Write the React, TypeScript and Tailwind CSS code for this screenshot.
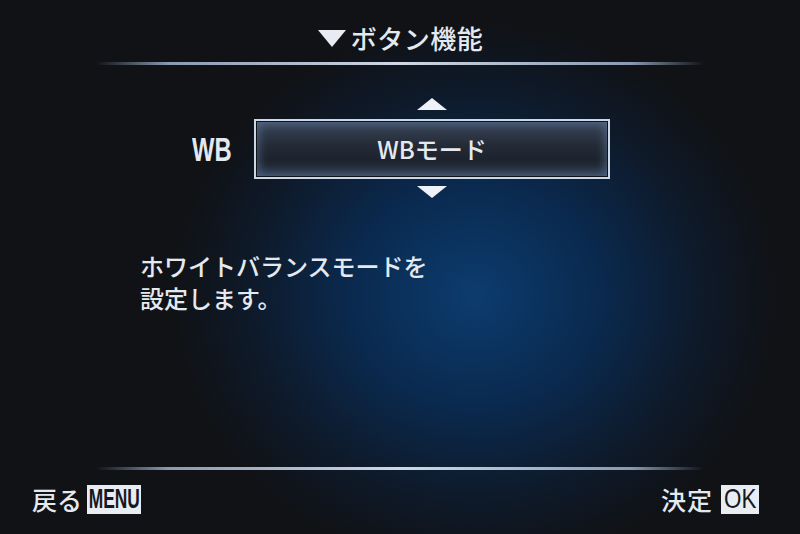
import React from "react";

const jp = "font-['Noto_Sans_CJK_JP','Noto_Sans',sans-serif]";
const latin = "font-['Liberation_Sans','Noto_Sans',sans-serif]";

function Divider() {
  return (
    <div className="mx-[96px] h-[3px] bg-[linear-gradient(to_right,rgba(120,140,170,0),#8a9ab2_12%,#cfd8e6_50%,#8a9ab2_88%,rgba(120,140,170,0))]" />
  );
}

function Arrow({ up }: { up?: boolean }) {
  return (
    <svg width="32" height="12" viewBox="0 0 32 12" className="block">
      {up ? (
        <polygon points="16,0 31,12 1,12" fill="#eef2f8" />
      ) : (
        <polygon points="1,0 31,0 16,12" fill="#eef2f8" />
      )}
    </svg>
  );
}

function KeyBadge({ label, w, bold }: { label: string; w: string; bold?: boolean }) {
  return (
    <span
      className={`${w} inline-flex h-[29px] items-center justify-center overflow-hidden bg-[#e8edf3] text-[#15181e]`}
    >
      <span
        className={`${latin} inline-block text-[28px] leading-none ${
          bold ? "scale-x-[0.62] font-bold" : "scale-x-[0.8] font-normal"
        }`}
      >
        {label}
      </span>
    </span>
  );
}

export default function App() {
  return (
    <div
      className={`${jp} flex h-[534px] w-[800px] flex-col overflow-hidden bg-[#101216] bg-[radial-gradient(ellipse_300px_270px_at_475px_295px,#0c3c6e_0%,#0a2a50_40%,#0e1a2a_75%,#101216_100%)] font-medium text-[#e4e9f0]`}
    >
      {/* header */}
      <div className="flex h-[62px] items-start justify-center pt-[21px]">
        <span className="flex items-center text-[26px] leading-[34px] tracking-[0.5px]">
          <svg width="30" height="20" viewBox="0 0 30 20" className="mr-[4px]">
            <polygon points="1,2 29,2 15,19" fill="#e8ecf2" />
          </svg>
          ボタン機能
        </span>
      </div>
      <Divider />

      {/* selector */}
      <div className="mt-[33px] flex items-center pl-[192px]">
        <span className="w-[62px]">
          <span className={`${latin} inline-block origin-left scale-x-[0.72] pt-[2px] text-[33px] font-bold leading-none`}>
            WB
          </span>
        </span>
        <div className="flex flex-col items-center">
          <Arrow up />
          <div className="mt-[9px] flex h-[60px] w-[356px] items-center justify-center border-2 border-[#cbd6e6] bg-[linear-gradient(to_bottom,#3a4659,#232a36_45%,#1d232d_70%,#2e3a4c)] shadow-[inset_0_0_0_1px_#0f141b,inset_0_0_10px_3px_rgba(120,150,200,0.45)]">
            <span className="text-[24px] leading-none">WBモード</span>
          </div>
          <div className="mt-[7px]">
            <Arrow />
          </div>
        </div>
      </div>

      {/* description */}
      <div className="mt-[52px] pl-[140px] text-[24px] leading-[32px]">
        <p>ホワイトバランスモードを</p>
        <p>設定します。</p>
      </div>

      <div className="flex-1" />
      <Divider />

      {/* footer */}
      <div className="flex h-[64px] items-start justify-between pl-[32px] pr-[41px] pt-[14px]">
        <div className="flex items-center gap-[5px]">
          <span className="text-[25px] leading-[30px]">戻る</span>
          <KeyBadge label="MENU" w="w-[54px]" bold />
        </div>
        <div className="flex items-center gap-[8px]">
          <span className="text-[25px] leading-[30px] tracking-[1px]">決定</span>
          <KeyBadge label="OK" w="w-[38px]" />
        </div>
      </div>
    </div>
  );
}
